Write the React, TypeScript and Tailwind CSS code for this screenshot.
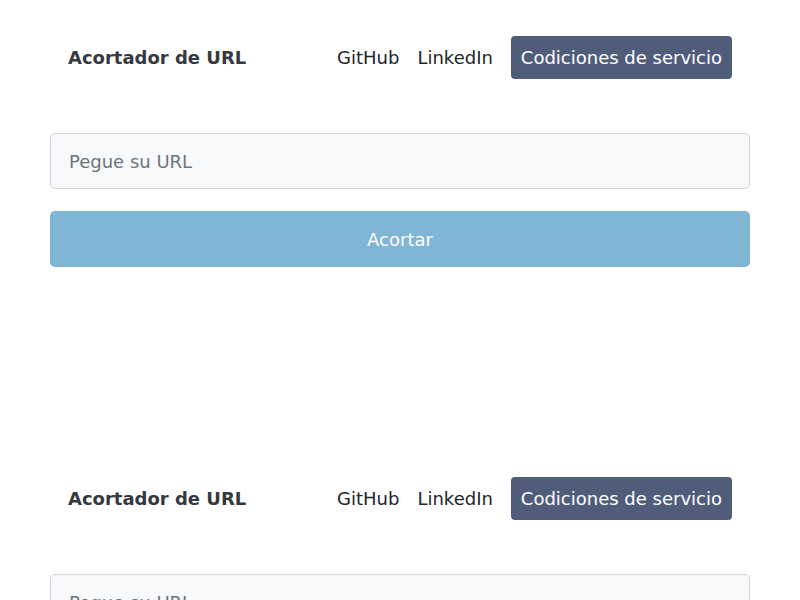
export default function App() {
  const Section = () => (
    <div className="h-[441px] w-[700px] mx-auto" style={{}}>
      {/* Navbar */}
      <nav className="flex items-center justify-between px-[18px] pt-9">
        <span className="text-[18px] font-bold text-[#343a40]">Acortador de URL</span>
        <div className="flex items-center text-[18px]">
          <a className="px-[9px] text-[#212529]">GitHub</a>
          <a className="px-[9px] text-[#212529]">LinkedIn</a>
          <a className="ml-[9px] px-[10px] h-[43px] flex items-center rounded bg-[#505d7a] text-white">
            Codiciones de servicio
          </a>
        </div>
      </nav>

      {/* Form */}
      <form className="mt-[54px] flex flex-col gap-[22px]">
        <input
          type="text"
          placeholder="Pegue su URL"
          className="h-[56px] w-full rounded-[5px] border border-[#ced4da] bg-[#f8f9fa] px-[18px] text-[18px] text-[#212529] placeholder:text-[#6c757d] outline-none"
        />
        <button
          type="button"
          className="h-[56px] w-full rounded-[5px] bg-[#7fb6d5] text-[18px] text-white"
        >
          Acortar
        </button>
      </form>
    </div>
  );

  return (
    <div className="min-h-screen bg-white font-['DejaVu_Sans',sans-serif]">
      <Section />
      <Section />
    </div>
  );
}
